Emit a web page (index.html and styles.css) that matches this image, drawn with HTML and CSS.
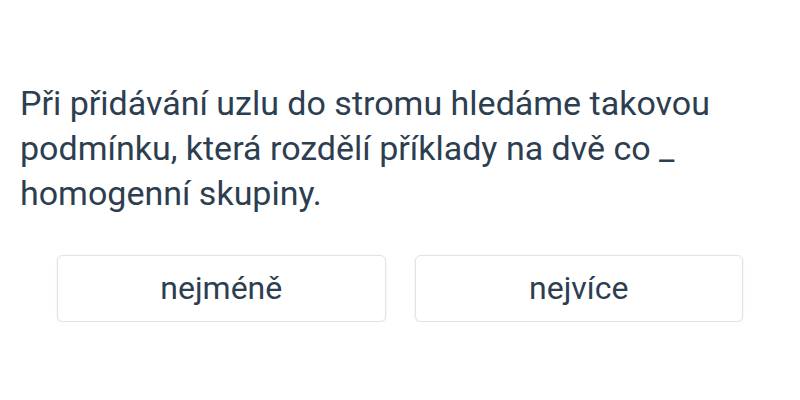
FILE: index.html
```html
<!DOCTYPE html>
<html lang="cs">
<head>
<meta charset="utf-8">
<link rel="stylesheet" href="styles.css">
</head>
<body>
<main class="quiz">
  <p class="question">Při přidávání uzlu do stromu hledáme takovou podmínku, která rozdělí příklady na dvě co _ homogenní skupiny.</p>
  <div class="options">
    <button class="option">nejméně</button>
    <button class="option">nejvíce</button>
  </div>
</main>
</body>
</html>
```
FILE: styles.css
```css
html, body {
  margin: 0;
  padding: 0;
  background: #ffffff;
}
.quiz {
  padding: 81px 20px 0 20px;
  font-family: Roboto, "Noto Sans", sans-serif;
  color: #2c3e50;
}
.question {
  margin: 0;
  font-size: 34px;
  line-height: 45px;
  width: 740px;
}
.options {
  display: grid;
  grid-template-columns: 1fr 1fr;
  gap: 29px;
  margin: 39px 37px 0 37px;
}
.option {
  height: 67px;
  background: #fff;
  border: 1px solid #e3e3e3;
  border-radius: 6px;
  box-shadow: 0 1px 3px rgba(0,0,0,0.08);
  font-family: Roboto, "Noto Sans", sans-serif;
  font-size: 32px;
  color: #2c3e50;
  padding: 0 0 2px 0;
}
```
